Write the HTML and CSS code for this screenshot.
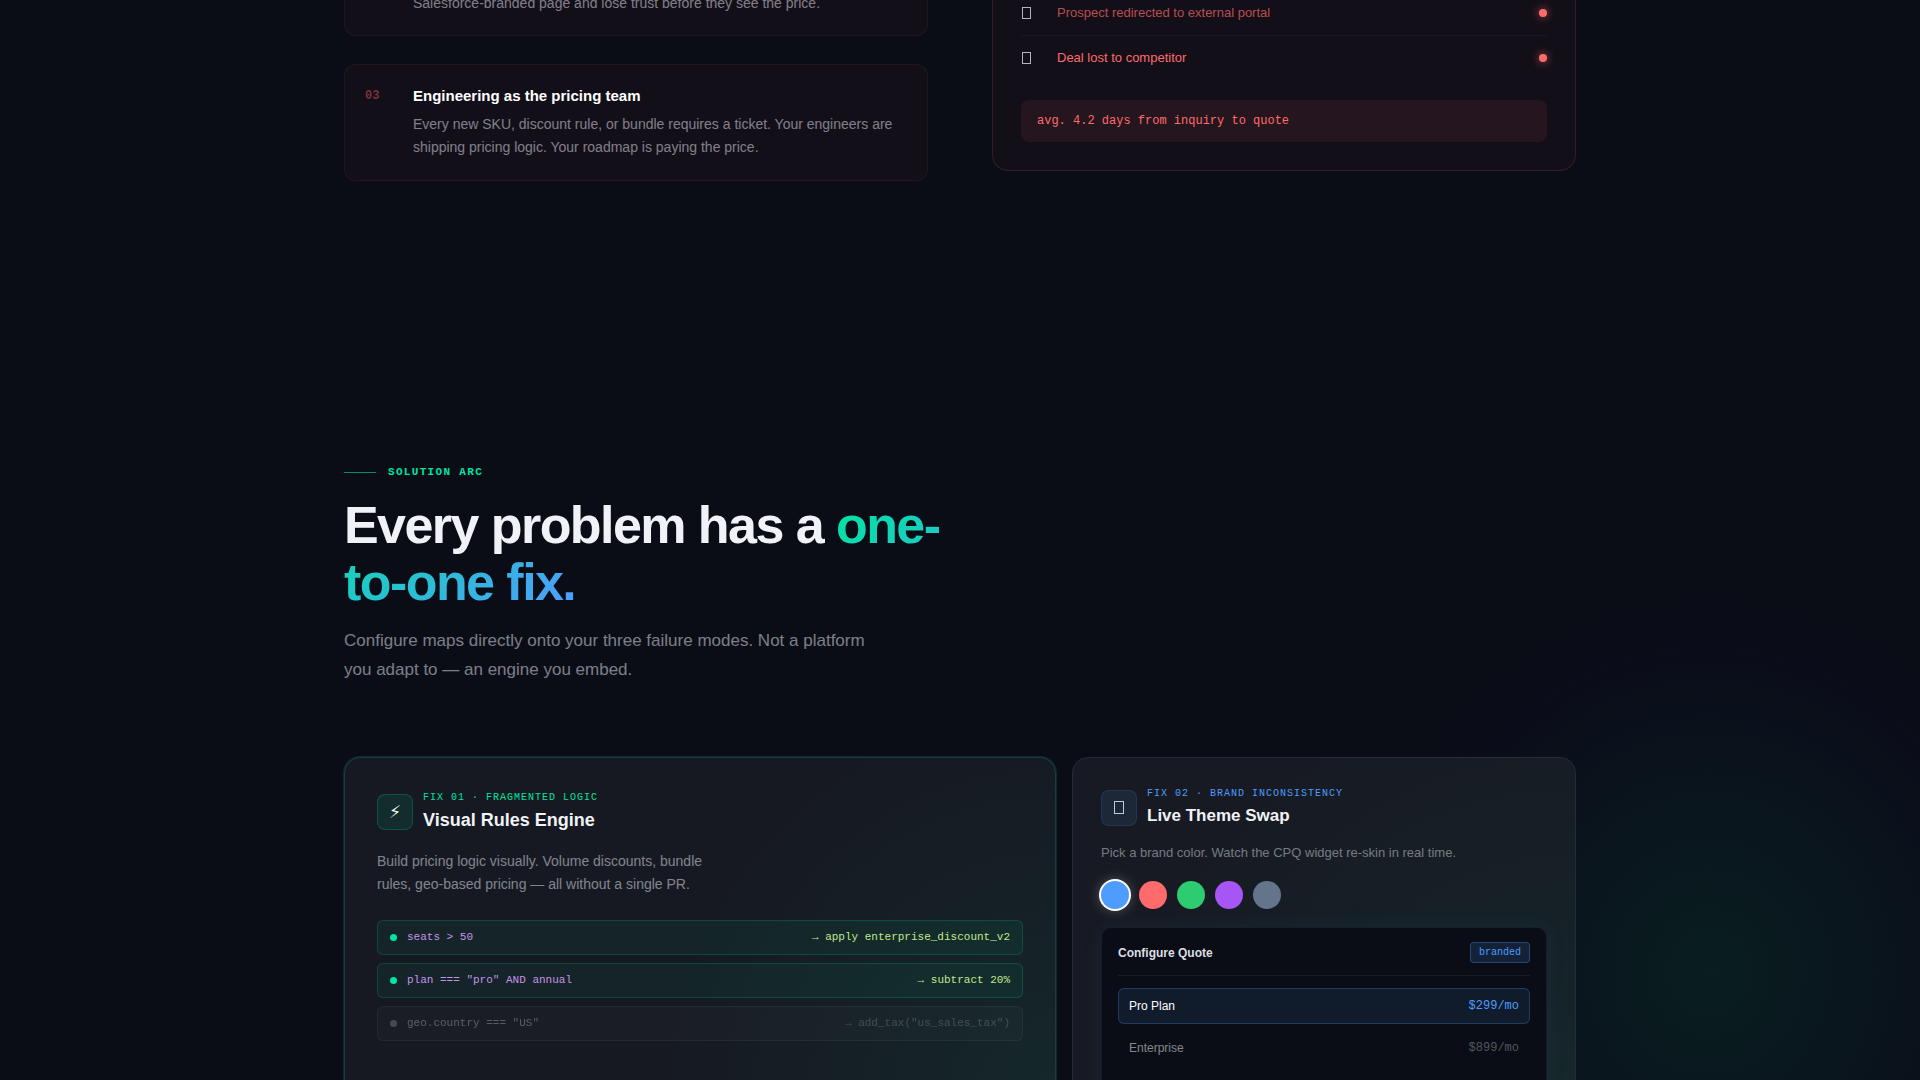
FILE: index.html
```html
<!DOCTYPE html>
<html lang="en">
<head>
    <meta charset="UTF-8">
    <meta name="viewport" content="width=device-width, initial-scale=1.0">
    <title>Configure</title>
    <link rel="stylesheet" href="styles.css">
</head>
<body>
    <section class="problem">
        <div class="container problem-grid">
            <div class="problem-list">
                <article class="problem-card problem-card-cut">
                    <p class="problem-text">Salesforce-branded page and lose trust before they see the price.</p>
                </article>
                <article class="problem-card">
                    <span class="problem-num">03</span>
                    <div>
                        <h3 class="problem-title">Engineering as the pricing team</h3>
                        <p class="problem-text">Every new SKU, discount rule, or bundle requires a ticket. Your engineers are shipping pricing logic. Your roadmap is paying the price.</p>
                    </div>
                </article>
            </div>
            <aside class="flow">
                <ul class="flow-list">
                    <li class="flow-row">
                        <svg class="flow-icon" viewBox="0 0 24 16"><rect x="1.5" y="2.5" width="8" height="11"/></svg>
                        <span class="flow-label">Prospect redirected to external portal</span>
                        <span class="flow-dot"></span>
                    </li>
                    <li class="flow-row lost">
                        <svg class="flow-icon" viewBox="0 0 24 16"><rect x="1.5" y="2.5" width="8" height="11"/></svg>
                        <span class="flow-label">Deal lost to competitor</span>
                        <span class="flow-dot"></span>
                    </li>
                </ul>
                <p class="flow-stat">avg. 4.2 days from inquiry to quote</p>
            </aside>
        </div>
    </section>

    <section class="solution">
        <div class="container">
            <p class="eyebrow">SOLUTION ARC</p>
            <h2 class="headline">Every problem has a <span class="gradient-text">one-to-one fix.</span></h2>
            <p class="lead">Configure maps directly onto your three failure modes. Not a platform you adapt to — an engine you embed.</p>

            <div class="bento">
                <article class="card card-rules">
                    <header class="card-head">
                        <span class="card-icon green">&#x26A1;&#xFE0E;</span>
                        <div>
                            <p class="card-tag green">FIX 01 · FRAGMENTED LOGIC</p>
                            <h3 class="card-title">Visual Rules Engine</h3>
                        </div>
                    </header>
                    <p class="card-text">Build pricing logic visually. Volume discounts, bundle rules, geo-based pricing — all without a single PR.</p>
                    <ul class="rules">
                        <li class="rule active">
                            <span class="rule-dot"></span>
                            <code class="rule-if">seats &gt; 50</code>
                            <code class="rule-then">→ apply enterprise_discount_v2</code>
                        </li>
                        <li class="rule active">
                            <span class="rule-dot"></span>
                            <code class="rule-if">plan === "pro" AND annual</code>
                            <code class="rule-then">→ subtract 20%</code>
                        </li>
                        <li class="rule">
                            <span class="rule-dot"></span>
                            <code class="rule-if">geo.country === "US"</code>
                            <code class="rule-then">→ add_tax("us_sales_tax")</code>
                        </li>
                    </ul>
                </article>

                <article class="card card-theme">
                    <header class="card-head">
                        <span class="card-icon blue">
                            <svg width="18" height="18" viewBox="0 0 18 18"><rect x="4.5" y="2.5" width="9" height="12"/></svg>
                        </span>
                        <div>
                            <p class="card-tag blue">FIX 02 · BRAND INCONSISTENCY</p>
                            <h3 class="card-title">Live Theme Swap</h3>
                        </div>
                    </header>
                    <p class="card-text">Pick a brand color. Watch the CPQ widget re-skin in real time.</p>
                    <div class="swatches">
                        <button type="button" class="swatch swatch-blue selected" aria-label="Blue"></button>
                        <button type="button" class="swatch swatch-coral" aria-label="Coral"></button>
                        <button type="button" class="swatch swatch-green" aria-label="Green"></button>
                        <button type="button" class="swatch swatch-purple" aria-label="Purple"></button>
                        <button type="button" class="swatch swatch-slate" aria-label="Slate"></button>
                    </div>
                    <div class="widget">
                        <div class="widget-head">
                            <h4 class="widget-title">Configure Quote</h4>
                            <span class="badge">branded</span>
                        </div>
                        <div class="plan selected">
                            <span>Pro Plan</span>
                            <span class="plan-price">$299/mo</span>
                        </div>
                        <div class="plan">
                            <span>Enterprise</span>
                            <span class="plan-price">$899/mo</span>
                        </div>
                    </div>
                </article>
            </div>
        </div>
    </section>

    <script>
        const swatches = document.querySelectorAll('.swatch');
        swatches.forEach(swatch => {
            swatch.addEventListener('click', () => {
                swatches.forEach(s => s.classList.remove('selected'));
                swatch.classList.add('selected');
            });
        });
    </script>
</body>
</html>
```

FILE: styles.css
```css
:root {
    --bg: #0a0d15;
    --green: #00e5a0;
    --blue: #4f9cff;
    --red: #ff6b6b;
    --text: #f0f2f8;
    --muted: rgba(240, 240, 255, 0.5);
    --sans: "Liberation Sans", Arial, sans-serif;
    --mono: "Liberation Mono", "Courier New", monospace;
}
* {
    box-sizing: border-box;
    margin: 0;
    padding: 0;
}
body {
    height: 100vh;
    overflow: hidden;
    font-family: var(--sans);
    line-height: 1.6;
    color: var(--text);
    background:
        radial-gradient(ellipse 360px 390px at 89% 90%, rgba(0, 229, 160, 0.08), rgba(0, 160, 200, 0.04) 55%, rgba(20, 0, 80, 0.06) 85%, transparent),
        var(--bg);
}
ul {
    list-style: none;
}
.container {
    max-width: 1280px;
    margin: 0 auto;
    padding: 0 24px;
}

/* problem section */
.problem {
    margin-top: -9px;
}
.problem-grid {
    display: grid;
    grid-template-columns: 1fr 1fr;
    gap: 64px;
    align-items: start;
}
.problem-list {
    display: flex;
    flex-direction: column;
    gap: 28px;
}
.problem-card {
    display: flex;
    gap: 16px;
    padding: 21px 20px;
    border: 1px solid rgba(255, 107, 107, 0.08);
    border-radius: 12px;
    background: rgba(255, 80, 107, 0.04);
}
.problem-card-cut {
    padding: 1px 20px 20px 68px;
    border-top: 0;
    border-top-left-radius: 0;
    border-top-right-radius: 0;
}
.problem-num {
    flex: 0 0 32px;
    font-family: var(--mono);
    font-size: 12px;
    font-weight: bold;
    line-height: 20px;
    color: rgba(255, 90, 107, 0.45);
}
.problem-title {
    margin-bottom: 7px;
    font-size: 15px;
    line-height: 20px;
    color: #fff;
}
.problem-text {
    font-size: 14px;
    line-height: 23px;
    color: var(--muted);
}
.flow {
    padding: 0 28px 28px;
    border: 1px solid rgba(255, 107, 107, 0.15);
    border-top: 0;
    border-radius: 0 0 16px 16px;
    background: rgba(255, 80, 107, 0.04);
}
.flow-row {
    display: flex;
    align-items: center;
    gap: 12px;
    height: 45px;
    font-size: 13px;
    color: rgba(255, 107, 107, 0.7);
    border-bottom: 1px solid rgba(255, 255, 255, 0.04);
}
.flow-row.lost {
    height: 44px;
    color: var(--red);
    border-bottom: 0;
}
.flow-icon {
    width: 24px;
    height: 16px;
    fill: none;
    stroke: #b4b4ba;
}
.flow-label {
    flex: 1;
}
.flow-dot {
    width: 8px;
    height: 8px;
    border-radius: 50%;
    background: var(--red);
    box-shadow: 0 0 8px rgba(255, 107, 107, 0.7);
}
.flow-stat {
    margin-top: 20px;
    padding: 12px 16px;
    font-family: var(--mono);
    font-size: 12px;
    line-height: 18px;
    color: var(--red);
    border-radius: 8px;
    background: rgba(255, 107, 107, 0.08);
}

/* solution section */
.solution {
    padding-top: 282px;
}
.eyebrow {
    display: flex;
    align-items: center;
    gap: 12px;
    font-family: var(--mono);
    font-size: 11px;
    font-weight: bold;
    line-height: 18px;
    letter-spacing: 0.12em;
    color: var(--green);
}
.eyebrow::before {
    content: "";
    width: 32px;
    height: 1px;
    background: var(--green);
    opacity: 0.6;
}
.headline {
    max-width: 640px;
    margin-top: 16px;
    font-size: 52px;
    line-height: 57px;
    letter-spacing: -0.03em;
}
.gradient-text {
    color: transparent;
    background: linear-gradient(135deg, var(--green), var(--blue));
    -webkit-background-clip: text;
    background-clip: text;
}
.lead {
    max-width: 540px;
    margin-top: 15px;
    font-size: 17px;
    line-height: 29px;
    color: var(--muted);
}
.bento {
    display: grid;
    grid-template-columns: repeat(12, 1fr);
    gap: 16px;
    margin-top: 73px;
}
.card {
    min-height: 400px;
    border: 1px solid #232d38;
    border-radius: 16px;
}
.card-rules {
    grid-column: span 7;
    padding: 32px;
    border-color: #1f3a42;
    background:
        radial-gradient(circle 400px at 100% 78%, rgba(0, 229, 160, 0.07), transparent),
        #161921;
    box-shadow: 0 0 0 1px rgba(0, 229, 160, 0.15);
}
.card-theme {
    grid-column: span 5;
    padding: 28px;
    background:
        radial-gradient(circle 480px at 100% 90%, rgba(0, 229, 160, 0.07), transparent),
        #171a22;
}
.card-head {
    display: flex;
    align-items: center;
    gap: 10px;
}
.card-icon {
    display: flex;
    align-items: center;
    justify-content: center;
    width: 36px;
    height: 36px;
    font-family: "DejaVu Sans", sans-serif;
    font-size: 18px;
    border-radius: 8px;
}
.card-icon svg {
    fill: none;
    stroke: #c4c8d0;
}
.card-icon.green {
    border: 1px solid rgba(0, 229, 160, 0.2);
    background: rgba(0, 229, 160, 0.1);
}
.card-icon.blue {
    border: 1px solid rgba(79, 156, 255, 0.15);
    background: rgba(79, 156, 255, 0.1);
}
.card-tag {
    font-family: var(--mono);
    font-size: 10px;
    line-height: 16px;
    letter-spacing: 0.1em;
}
.card-tag.green {
    color: var(--green);
}
.card-tag.blue {
    color: var(--blue);
}
.card-title {
    font-size: 18px;
    line-height: 28px;
}
.card-text {
    max-width: 340px;
    margin-top: 16px;
    font-size: 14px;
    line-height: 23px;
    color: var(--muted);
}
.card-theme .card-title {
    font-size: 17px;
}
.card-theme .card-text {
    max-width: none;
    margin-top: 12px;
    font-size: 13px;
    line-height: 21px;
    color: rgba(240, 240, 255, 0.45);
}
.rules {
    display: flex;
    flex-direction: column;
    gap: 8px;
    margin-top: 24px;
}
.rule {
    display: flex;
    align-items: center;
    gap: 10px;
    padding: 10px 12px;
    font-size: 11px;
    line-height: 13px;
    color: #fff;
    border: 1px solid rgba(255, 255, 255, 0.12);
    border-radius: 6px;
    background: rgba(255, 255, 255, 0.05);
    opacity: 0.4;
}
.rule.active {
    border-color: rgba(0, 229, 160, 0.18);
    background: rgba(0, 229, 160, 0.06);
    opacity: 1;
}
.rule code {
    font-family: var(--mono);
}
.rule-dot {
    width: 7px;
    height: 7px;
    border-radius: 50%;
    background: rgba(255, 255, 255, 0.5);
}
.rule-if {
    color: rgba(255, 255, 255, 0.7);
}
.rule-then {
    margin-left: auto;
    color: rgba(255, 255, 255, 0.45);
}
.rule.active .rule-dot {
    background: var(--green);
}
.rule.active .rule-if {
    color: #c792ea;
}
.rule.active .rule-then {
    color: #c3e88d;
}
.swatches {
    display: flex;
    gap: 10px;
    margin-top: 18px;
}
.swatch {
    width: 28px;
    height: 28px;
    border: 0;
    border-radius: 50%;
    cursor: pointer;
}
.swatch.selected {
    box-shadow: 0 0 0 2px #fff, 0 0 14px rgba(255, 255, 255, 0.35);
}
.swatch-blue { background: #4f9cff; }
.swatch-coral { background: #ff6b6b; }
.swatch-green { background: #2ecc71; }
.swatch-purple { background: #a855f7; }
.swatch-slate { background: #64748b; }
.widget {
    margin-top: 18px;
    padding: 14px 16px;
    min-height: 240px;
    border: 1px solid rgba(79, 156, 255, 0.12);
    border-radius: 10px;
    background: var(--bg);
    box-shadow: 0 0 20px rgba(79, 156, 255, 0.08);
}
.widget-head {
    display: flex;
    align-items: center;
    justify-content: space-between;
    margin-bottom: 12px;
    padding-bottom: 12px;
    border-bottom: 1px solid rgba(255, 255, 255, 0.06);
}
.widget-title {
    font-size: 12px;
    line-height: 20px;
    color: #dcdee4;
}
.badge {
    padding: 2px 8px;
    font-family: var(--mono);
    font-size: 10px;
    line-height: 15px;
    color: var(--blue);
    border: 1px solid rgba(79, 156, 255, 0.3);
    border-radius: 4px;
    background: rgba(79, 156, 255, 0.15);
}
.plan {
    display: flex;
    align-items: center;
    justify-content: space-between;
    height: 36px;
    margin-bottom: 6px;
    padding: 0 10px;
    font-size: 12px;
    line-height: 20px;
    color: rgba(255, 255, 255, 0.5);
    border: 1px solid transparent;
    border-radius: 6px;
}
.plan.selected {
    color: #fff;
    border-color: rgba(79, 156, 255, 0.25);
    background: rgba(79, 156, 255, 0.1);
}
.plan-price {
    font-family: var(--mono);
    color: rgba(255, 255, 255, 0.3);
}
.plan.selected .plan-price {
    color: var(--blue);
}
```
